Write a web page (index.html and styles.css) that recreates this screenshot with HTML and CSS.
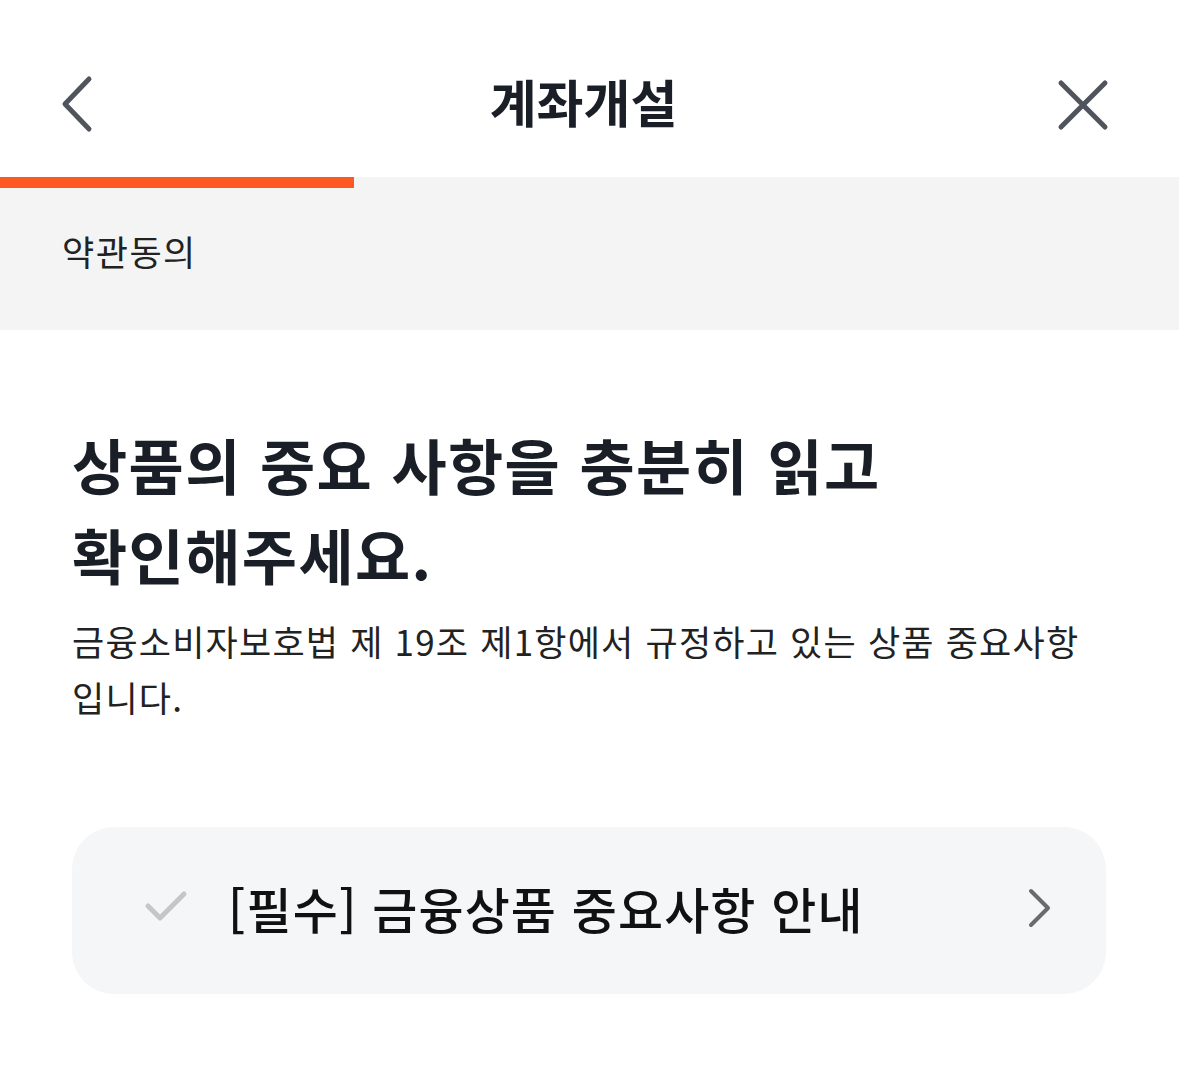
FILE: index.html
```html
<!DOCTYPE html>
<html lang="ko">
<head>
  <meta charset="UTF-8" />
  <meta name="viewport" content="width=device-width, initial-scale=1.0" />
  <title>계좌개설</title>
  <link rel="stylesheet" href="styles.css">
</head>
<body>
  <div class="screen">
    <header class="topbar">
      <button class="icon-btn back" aria-label="뒤로">
        <svg width="40" height="60" viewBox="0 0 40 60">
          <path d="M31 4 L7 29 L31 54" fill="none" stroke="#50545d" stroke-width="5" stroke-linecap="round" stroke-linejoin="round"/>
        </svg>
      </button>
      <h1 class="title">계좌개설</h1>
      <button class="icon-btn close" aria-label="닫기">
        <svg width="52" height="52" viewBox="0 0 52 52">
          <path d="M4 4 L48 48 M48 4 L4 48" fill="none" stroke="#50545d" stroke-width="5" stroke-linecap="round"/>
        </svg>
      </button>
    </header>

    <div class="progress">
      <div class="progress-fill" style="width: 30%"></div>
    </div>

    <div class="step">약관동의</div>

    <main class="content">
      <h2 class="headline">상품의 중요 사항을 충분히 읽고<br>확인해주세요.</h2>
      <p class="desc">금융소비자보호법 제 19조 제1항에서 규정하고 있는 상품 중요사항 입니다.</p>

      <div class="agree-card">
        <svg class="check" width="44" height="34" viewBox="0 0 44 34">
          <path d="M4 17 L16 29 L40 5" fill="none" stroke="#c6c6c6" stroke-width="5" stroke-linecap="round" stroke-linejoin="round"/>
        </svg>
        <span class="agree-text">[필수] 금융상품 중요사항 안내</span>
        <svg class="arrow" width="24" height="40" viewBox="0 0 24 40">
          <path d="M3 3 L20 20 L3 37" fill="none" stroke="#6b6b6b" stroke-width="4" stroke-linecap="round" stroke-linejoin="round"/>
        </svg>
      </div>
    </main>
  </div>
</body>
</html>
```

FILE: styles.css
```css
body {
  margin: 0;
  padding: 0;
  background: #fff;
  font-family: "Noto Sans CJK KR", "Noto Sans", sans-serif;
  color: #1a1e26;
}
.screen {
  width: 1179px;
}
.topbar {
  height: 177px;
  display: grid;
  grid-template-columns: 1fr auto 1fr;
  align-items: center;
  padding: 0 70px 0 58px;
  box-sizing: border-box;
}
.icon-btn {
  background: none;
  border: 0;
  padding: 0;
  display: flex;
  margin-top: 32px;
}
.back {
  justify-self: start;
}
.close {
  justify-self: end;
}
.title {
  margin: 24px 0 0 0;
  font-size: 51px;
  font-weight: 700;
  color: #1a1e26;
  letter-spacing: 0;
}
.progress {
  height: 11px;
  background: #f3f4f3;
}
.progress-fill {
  height: 100%;
  background: #ff5722;
}
.step {
  background: #f3f4f3;
  height: 142px;
  padding: 0 0 18px 62px;
  display: flex;
  align-items: center;
  font-size: 35px;
  color: #222;
  letter-spacing: 1.5px;
  box-sizing: border-box;
}
.content {
  padding: 89px 72px 0 72px;
}
.headline {
  margin: 0;
  font-size: 60px;
  font-weight: 700;
  line-height: 90px;
  color: #1a1e26;
  letter-spacing: 1.4px;
}
.desc {
  margin: 14px 0 0 0;
  font-size: 35px;
  line-height: 56px;
  color: #222;
  width: 1020px;
  letter-spacing: 1.2px;
  word-break: keep-all;
}
.agree-card {
  margin-top: 102px;
  height: 167px;
  width: 1034px;
  background: #f5f6f8;
  border-radius: 42px;
  display: flex;
  align-items: center;
  padding: 0 54px 6px 72px;
  box-sizing: border-box;
}
.check {
  flex: none;
  margin-top: -4px;
}
.agree-text {
  margin-left: 40px;
  font-size: 49px;
  font-weight: 500;
  color: #111;
  letter-spacing: 1.1px;
  flex: 1;
}
.arrow {
  flex: none;
}
```
